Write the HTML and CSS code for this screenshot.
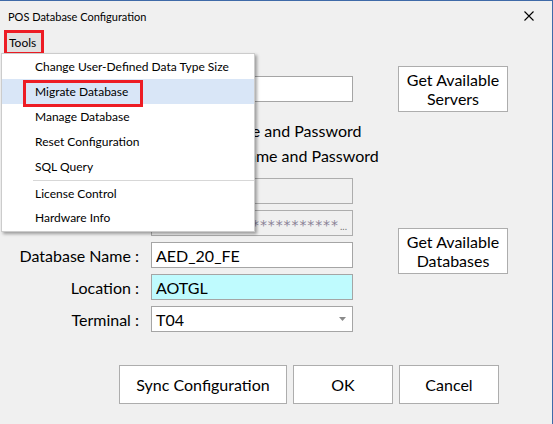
FILE: index.html
```html
<!DOCTYPE html>
<html lang="en">
<head>
  <meta charset="UTF-8">
  <meta name="viewport" content="width=device-width, initial-scale=1.0">
  <title>POS Database Configuration</title>
  <link rel="stylesheet" href="styles.css">
</head>
<body>
  <div class="window">
    <div class="titlebar">
      <span class="title">POS Database Configuration</span>
      <button class="close" title="Close">
        <svg width="10" height="10" viewBox="0 0 10 10">
          <path d="M0.5 0.5 L9.5 9.5 M9.5 0.5 L0.5 9.5" stroke="#000" stroke-width="1.1" fill="none"/>
        </svg>
      </button>
    </div>

    <div class="menubar">
      <div class="menu-item open marked">Tools
        <div class="dropdown">
          <div class="drop-item">Change User-Defined Data Type Size</div>
          <div class="drop-item hover">Migrate Database<span class="mark"></span></div>
          <div class="drop-item">Manage Database</div>
          <div class="drop-item">Reset Configuration</div>
          <div class="drop-item">SQL Query</div>
          <div class="separator"></div>
          <div class="drop-item short">License Control</div>
          <div class="drop-item short">Hardware Info</div>
        </div>
      </div>
    </div>

    <div class="content">
      <div class="fields">
        <div class="row">
          <label class="label">Server Name :</label>
          <input class="field" type="text" value="">
        </div>
        <div class="radios">
          <label class="radio"><span class="dot"></span>Use Windows User Name and Password</label>
          <label class="radio"><span class="dot checked"></span>Use SQL Server Login Name and Password</label>
        </div>
        <div class="row after-radios">
          <label class="label">User Name :</label>
          <div class="field disabled"></div>
        </div>
        <div class="row">
          <label class="label">Password :</label>
          <div class="field disabled password">
            <span class="stars">**********************</span>
            <span class="dots">...</span>
          </div>
        </div>
        <div class="row">
          <label class="label">Database Name :</label>
          <input class="field" type="text" value="AED_20_FE">
        </div>
        <div class="row">
          <label class="label">Location :</label>
          <input class="field location" type="text" value="AOTGL">
        </div>
        <div class="row">
          <label class="label">Terminal :</label>
          <div class="field combo">
            <span>T04</span>
            <svg class="arrow" width="7" height="4" viewBox="0 0 7 4"><path d="M0 0 H7 L3.5 4 Z" fill="#8a8a8a"/></svg>
          </div>
        </div>
      </div>

      <div class="side-buttons">
        <button class="btn tall">Get Available<br>Servers</button>
        <button class="btn tall lower">Get Available<br>Databases</button>
      </div>
    </div>

    <div class="actions">
      <button class="btn action sync">Sync Configuration</button>
      <button class="btn action">OK</button>
      <button class="btn action">Cancel</button>
    </div>
  </div>
</body>
</html>
```
FILE: styles.css
```css
* {
  box-sizing: border-box;
}
body {
  margin: 0;
  font-family: Lato, "Noto Sans", sans-serif;
  color: #000;
  background: #f0f0f0;
}
.window {
  width: 553px;
  height: 424px;
  background: #f0f0f0;
  border-top: 1px solid #3f6aa8;
  border-right: 1px solid #3f6aa8;
  overflow: hidden;
}

/* title bar */
.titlebar {
  display: flex;
  align-items: center;
  height: 30px;
  padding-left: 8px;
}
.title {
  font-size: 11px;
}
.close {
  margin-left: auto;
  width: 46px;
  height: 30px;
  border: none;
  background: transparent;
  display: flex;
  align-items: center;
  justify-content: center;
  padding: 0;
}

/* menu */
.menubar {
  height: 23px;
  padding: 2px 0 0 7px;
  font-size: 12px;
}
.menu-item {
  position: relative;
  display: inline-flex;
  align-items: center;
  height: 19px;
  padding: 0 5px 0 2px;
}
.menu-item.open {
  background: #e1e1e1;
}
.menu-item.marked {
  outline: 3px solid #ed1c24;
}
.dropdown {
  position: absolute;
  left: -6px;
  top: 20px;
  width: 254px;
  background: #fff;
  border: 1px solid #cccccc;
  box-shadow: 2px 2px 3px rgba(0, 0, 0, 0.35);
  padding-bottom: 1px;
  z-index: 5;
}
.drop-item {
  position: relative;
  height: 25px;
  line-height: 25px;
  padding-left: 33px;
  white-space: nowrap;
}
.drop-item.short {
  height: 24px;
  line-height: 24px;
}
.drop-item.hover {
  background: #d9e6f7;
}
.drop-item .mark {
  position: absolute;
  left: 21px;
  top: 1px;
  width: 120px;
  height: 27px;
  border: 3px solid #ed1c24;
}
.separator {
  height: 1px;
  margin: 1px 0 1px 31px;
  background: #d7d7d7;
}

/* form */
.content {
  display: flex;
  align-items: flex-start;
  padding: 12px 0 0 8px;
}
.fields {
  display: flex;
  flex-direction: column;
  flex: none;
  width: 345px;
  gap: 6px;
  padding-top: 10px;
}
.row {
  display: flex;
  align-items: center;
  height: 26px;
}
.row.after-radios {
  margin-top: 5px;
}
.label {
  width: 131px;
  margin-right: 12px;
  text-align: right;
  font-size: 16px;
  white-space: nowrap;
}
.field {
  width: 202px;
  height: 26px;
  border: 1px solid #a5a5a5;
  background: #fff;
  font: 16px Lato, sans-serif;
  color: #000;
  padding: 0 4px;
  display: flex;
  align-items: center;
  outline: none;
}
.field.disabled {
  background: #f0f0f0;
  border-color: #adadad;
}
.field.location {
  background: #bffbfe;
}
.password {
  justify-content: flex-end;
  overflow: hidden;
  padding-right: 5px;
}
.stars {
  color: #8a8296;
  font: 14px "DejaVu Sans", sans-serif;
  letter-spacing: 0.9px;
  margin-top: 3px;
  white-space: nowrap;
}
.dots {
  color: #777;
  font-size: 10px;
  align-self: flex-end;
  margin: 0 0 3px 1px;
}
.combo {
  justify-content: space-between;
  padding-right: 6px;
}
.radios {
  display: flex;
  flex-direction: column;
  gap: 1px;
  margin-top: 10px;
  padding-left: 66px;
}
.radio {
  display: flex;
  align-items: center;
  height: 24px;
  font-size: 16px;
  white-space: nowrap;
}
.dot {
  width: 13px;
  height: 13px;
  border: 1px solid #333;
  border-radius: 50%;
  background: #fff;
  margin-right: 5px;
}
.dot.checked {
  background: radial-gradient(circle, #333 0 3px, #fff 3.5px);
}

/* buttons */
.btn {
  background: #fff;
  border: 1px solid #adadad;
  font: 16px Lato, sans-serif;
  color: #000;
  padding: 0;
}
.side-buttons {
  display: flex;
  flex-direction: column;
  margin-left: 45px;
}
.btn.tall {
  width: 110px;
  height: 46px;
  line-height: 19px;
}
.btn.tall.lower {
  margin-top: 116px;
}
.actions {
  display: flex;
  gap: 6px;
  margin-top: 33px;
  padding-left: 119px;
}
.btn.action {
  width: 100px;
  height: 39px;
}
.btn.action.sync {
  width: 168px;
}
```
